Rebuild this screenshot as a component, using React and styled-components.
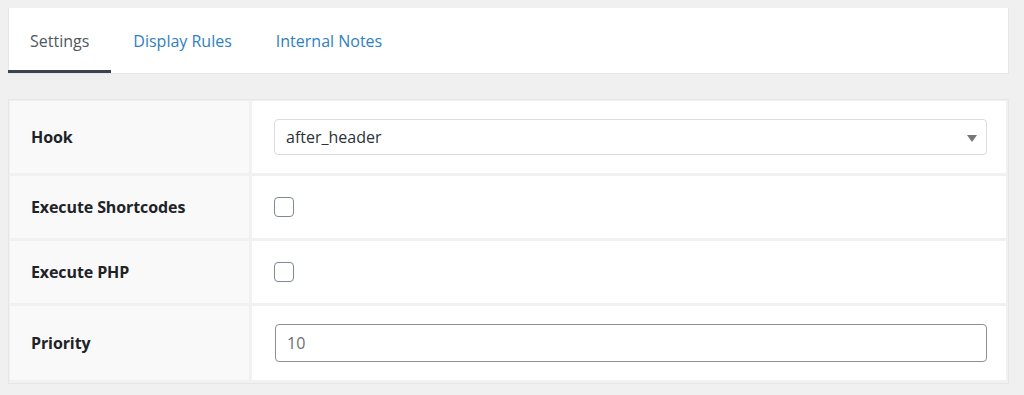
import React from "react";
import styled, { createGlobalStyle } from "styled-components";

const GlobalStyle = createGlobalStyle`
  html, body {
    margin: 0;
    background: #f0f0f1;
  }
  body {
    padding: 8px 15px 8px 8px;
    font-family: "Open Sans", "Noto Sans", Arial, sans-serif;
    color: #1d2327;
  }
  * { box-sizing: border-box; }
`;

const Page = styled.div`
  display: flex;
  flex-direction: column;
  gap: 25px;
`;

const TabBar = styled.nav`
  display: flex;
  height: 66px;
  background: #fff;
  border: 1px solid #e4e7ea;
  border-top: none;
`;

const Tab = styled.a`
  display: flex;
  align-items: center;
  padding: 3px 22px 0;
  font-size: 16px;
  text-decoration: none;
  cursor: pointer;
  color: ${(p) => (p.$active ? "#50575e" : "#2f80bf")};
  border-bottom: 3px solid ${(p) => (p.$active ? "#3c434a" : "transparent")};
  margin-left: ${(p) => (p.$active ? "-1px" : "0")};
`;

const Panel = styled.div`
  background: #f1f1f1;
  border: 1px solid #e6e6e6;
  padding: 1px 2px 3px 1px;
  display: grid;
  grid-template-columns: 239px 1fr;
  gap: 3px;
`;

const Label = styled.div`
  display: flex;
  align-items: center;
  background: #f9f9f9;
  padding: 18px 21px;
  min-height: ${(p) => p.$h}px;
  font-size: 16px;
  font-weight: 700;
  letter-spacing: -0.1px;
  color: #1d2327;
`;

const Value = styled.div`
  display: flex;
  align-items: center;
  background: #fff;
  padding: 18px 19px 18px 22px;
  min-height: ${(p) => p.$h}px;
`;

const SelectBox = styled.div`
  position: relative;
  flex: 1;
  height: 36px;
  display: flex;
  align-items: center;
  padding: 0 11px;
  border: 1px solid #dcdcde;
  border-radius: 4px;
  background: #fff;
  font-size: 16px;
  color: #2c3338;
`;

const Caret = styled.span`
  position: absolute;
  right: 9px;
  top: 15px;
  width: 0;
  height: 0;
  border-left: 5px solid transparent;
  border-right: 5px solid transparent;
  border-top: 7px solid #777;
`;

const Checkbox = styled.span`
  display: inline-block;
  width: 20px;
  height: 20px;
  border: 1.5px solid #7e8993;
  border-radius: 4px;
  background: #fff;
`;

const NumberInput = styled.input`
  flex: 1;
  height: 38px;
  margin-left: 1px;
  padding: 0 11px;
  border: 1px solid #8c8f94;
  border-radius: 4px;
  font-family: inherit;
  font-size: 16px;
  color: #6b7075;
  background: #fff;
  outline: none;
`;

const rows = [
  { label: "Hook", h: 72, field: "select" },
  { label: "Execute Shortcodes", h: 62, field: "check" },
  { label: "Execute PHP", h: 62, field: "check" },
  { label: "Priority", h: 74, field: "number" },
];

const Field = ({ type }) => {
  if (type === "select") {
    return (
      <SelectBox>
        after_header
        <Caret />
      </SelectBox>
    );
  }
  if (type === "check") return <Checkbox />;
  return <NumberInput defaultValue="10" />;
};

export default function App() {
  return (
    <>
      <GlobalStyle />
      <Page>
        <TabBar>
          <Tab $active>Settings</Tab>
          <Tab>Display Rules</Tab>
          <Tab>Internal Notes</Tab>
        </TabBar>
        <Panel>
          {rows.map((r) => (
            <React.Fragment key={r.label}>
              <Label $h={r.h}>{r.label}</Label>
              <Value $h={r.h}>
                <Field type={r.field} />
              </Value>
            </React.Fragment>
          ))}
        </Panel>
      </Page>
    </>
  );
}
